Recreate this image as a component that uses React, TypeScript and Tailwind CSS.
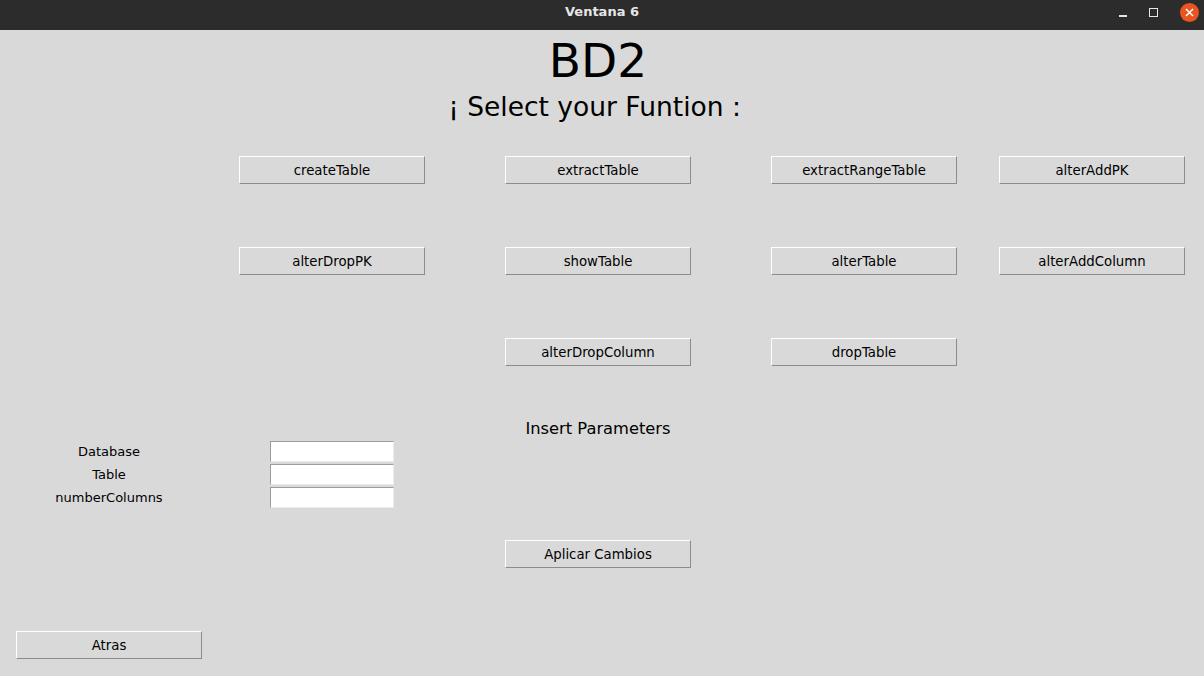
import React from "react";

const font = { fontFamily: '"DejaVu Sans", "Liberation Sans", sans-serif' };

function TkButton({ label, className = "" }: { label: string; className?: string }) {
  return (
    <button
      className={`flex h-[28px] w-[186px] items-center justify-center border border-t-white border-l-white border-r-[#8c8c8c] border-b-[#8c8c8c] bg-[#d9d9d9] pt-[2px] text-[13.3px] leading-none text-black ${className}`}
    >
      {label}
    </button>
  );
}

function Field({ label }: { label: string }) {
  return (
    <div className="flex h-[21px] items-center">
      <span className="w-[218px] text-center text-[13px] leading-none text-black">{label}</span>
      <div className="ml-[52px] h-[21px] w-[124px] border border-t-[#9c9c9c] border-l-[#9c9c9c] border-r-[#ececec] border-b-[#ececec] bg-white" />
    </div>
  );
}

const rows: (string | null)[][] = [
  ["createTable", "extractTable", "extractRangeTable", "alterAddPK"],
  ["alterDropPK", "showTable", "alterTable", "alterAddColumn"],
  [null, "alterDropColumn", "dropTable", null],
];

export default function App() {
  return (
    <div className="flex h-[676px] w-[1204px] flex-col overflow-hidden bg-[#d9d9d9]" style={font}>
      {/* window title bar */}
      <div className="relative flex h-[30px] shrink-0 items-start justify-center bg-[#2c2c2c] pt-[4px]">
        <span className="text-[13px] font-bold leading-[16px] text-[#e6e6e6]">Ventana 6</span>
        <div className="absolute right-[5px] top-0 flex h-[24px] items-center gap-[22px]">
          <div className="mt-[7px] h-[2px] w-[8px] bg-[#e6e6e6]" />
          <div className="h-[9px] w-[9px] border border-[#e6e6e6]" />
          <div className="flex h-[19px] w-[19px] items-center justify-center rounded-full bg-[#e95420]">
            <svg width="9" height="9" viewBox="0 0 9 9">
              <path d="M1 1 L8 8 M8 1 L1 8" stroke="white" strokeWidth="1.5" />
            </svg>
          </div>
        </div>
      </div>

      <div className="flex flex-col">
        <h1 className="mt-[7px] pr-[8px] text-center text-[47px] leading-[48px] text-black">BD2</h1>
        <h2 className="mt-[9px] pr-[15px] text-center text-[26.5px] leading-[26px] text-black">¡ Select your Funtion :</h2>

        <div className="mt-[36px] grid grid-cols-[266px_266px_228px_186px] gap-y-[63px] pl-[239px]">
          {rows.flat().map((b, i) =>
            b ? <TkButton key={i} label={b} /> : <div key={i} className="h-[28px]" />
          )}
        </div>

        <div className="ml-[505px] mt-[55px] flex w-[186px] justify-center whitespace-nowrap text-[16.3px] leading-[16px] text-black">
          Insert Parameters
        </div>

        <div className="mt-[4px] flex flex-col gap-[2px]">
          <Field label="Database" />
          <Field label="Table" />
          <Field label="numberColumns" />
        </div>

        <TkButton label="Aplicar Cambios" className="ml-[505px] mt-[32px]" />
        <TkButton label="Atras" className="ml-[16px] mt-[63px]" />
      </div>
    </div>
  );
}
